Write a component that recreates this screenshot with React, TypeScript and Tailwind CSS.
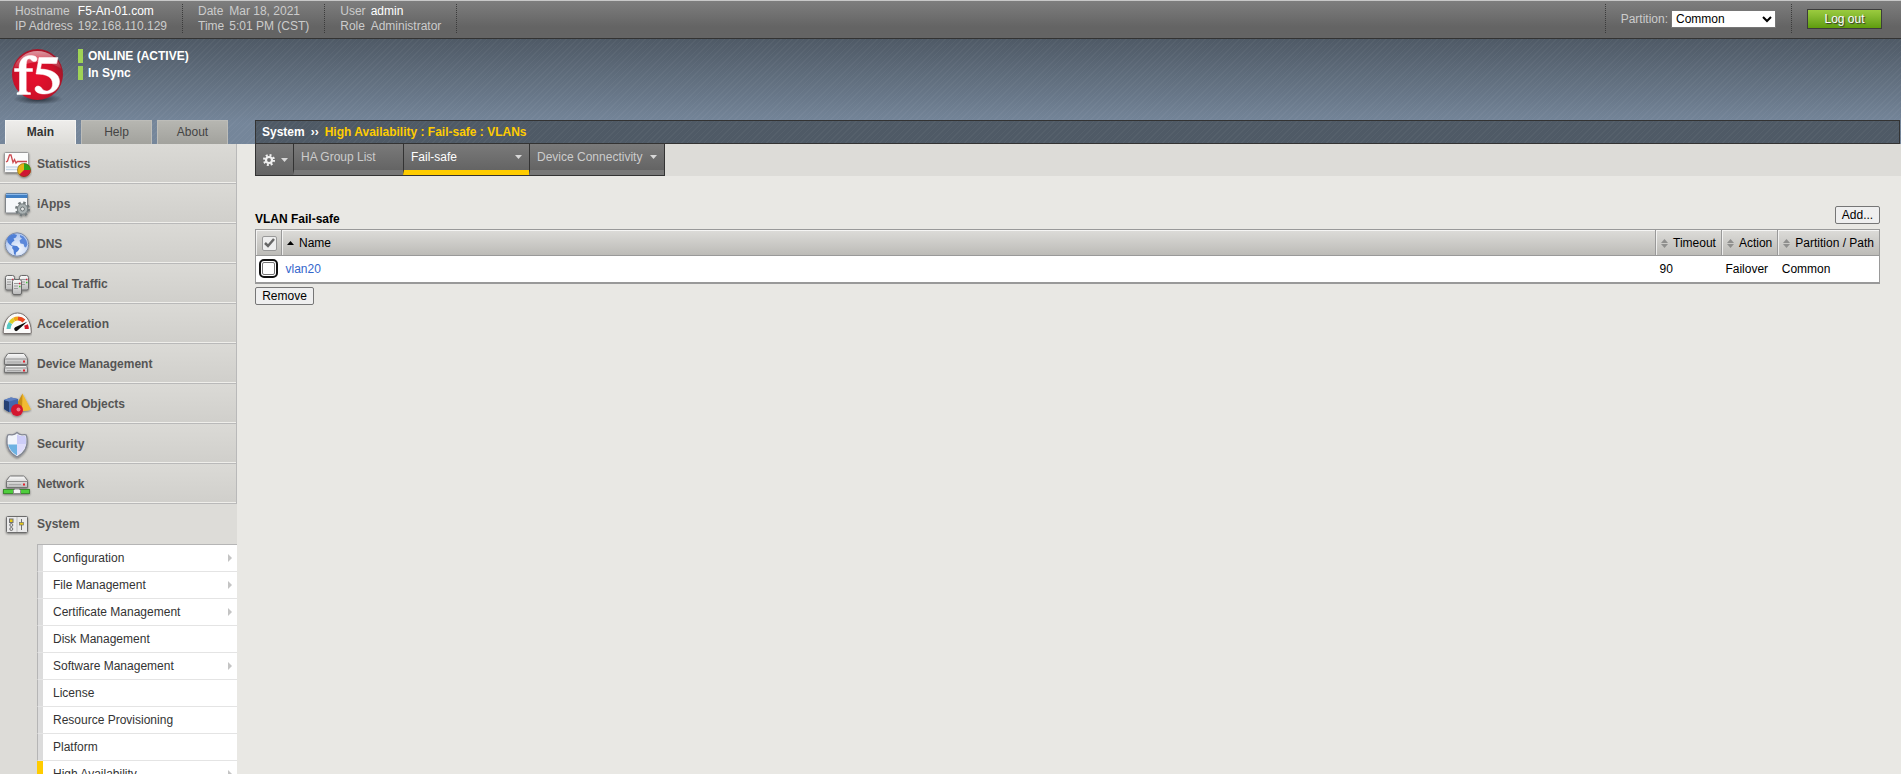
import React from "react";

const EMBOSS = "bg-linear-to-b from-[#dbdad6] to-[#d0cfcb]";

function IconShadow({ id }: { id: string }) {
  return (
    <filter id={id} x="-20%" y="-20%" width="150%" height="150%">
      <feDropShadow dx="0" dy="1" stdDeviation="1" floodOpacity="0.45" />
    </filter>
  );
}

function Frame({ name, children }: { name: string; children: React.ReactNode }) {
  return (
    <svg viewBox="0 0 32 32" width="32" height="32" className="shrink-0" aria-hidden="true">
      <defs>
        <IconShadow id={`sh-${name}`} />
        <linearGradient id={`metal-${name}`} x1="0" y1="0" x2="0" y2="1">
          <stop offset="0" stopColor="#fbfbfb" />
          <stop offset="1" stopColor="#b9b9b9" />
        </linearGradient>
      </defs>
      <g filter={`url(#sh-${name})`}>{children}</g>
    </svg>
  );
}

function StatisticsIcon() {
  return (
    <Frame name="stat">
      <rect x="4.5" y="4.5" width="24" height="20" rx="1" fill="#fcfcfc" stroke="#9a9a9a" />
      <path d="M6 19h21M6 21.500h21" stroke="#c6d8e8" strokeWidth="1.500" />
      <path d="M6 14l1.500-1 2-6 1.500 0 2 7.500 1.500-3 1.500 3.500 1.500-1.500H27" fill="none" stroke="#cc4a50" strokeWidth="1.300" />
      <circle cx="24" cy="22" r="6.800" fill="#e7b416" />
      <path d="M24 22V15.200A6.800 6.800 0 0 1 30.800 22Z" fill="#2ea31f" />
      <path d="M24 22H30.800A6.800 6.800 0 0 1 19.200 26.800Z" fill="#d01832" />
      <circle cx="24" cy="22" r="6.500" fill="none" stroke="#5c4a20" strokeOpacity="0.600" strokeWidth="0.800" />
    </Frame>
  );
}

function AppsIcon() {
  return (
    <Frame name="apps">
      <rect x="5.500" y="5.500" width="22" height="19.500" rx="1" fill="#f6f8fa" stroke="#808488" />
      <rect x="6" y="5.500" width="21.500" height="4.500" fill="#3f7fc4" />
      <path d="M6 6.500h21" stroke="#8ab8ea" />
      <circle cx="22.500" cy="21" r="6.200" fill="none" stroke="#727a7c" strokeWidth="2.600" strokeDasharray="2.430 2.430" />
      <circle cx="22.500" cy="21" r="5.200" fill="#aab2b3" stroke="#767e80" />
      <circle cx="22.500" cy="21" r="2" fill="#e4e6e6" stroke="#6d7577" />
    </Frame>
  );
}

function DnsIcon() {
  return (
    <Frame name="dns">
      <defs>
        <radialGradient id="globe" cx="0.550" cy="0.700" r="0.700">
          <stop offset="0" stopColor="#f7faff" />
          <stop offset="1" stopColor="#a9c2ee" />
        </radialGradient>
      </defs>
      <circle cx="17" cy="16.500" r="11.700" fill="url(#globe)" stroke="#7d8ba6" />
      <path d="M7 11c1.500-3 4-4.500 7-5l3 1-1 2.500-2.500 1 1 2-2.500 2-1 2 2.500 1.500-1 .5-3-2L7.500 14z" fill="#4f7fd6" />
      <path d="M13 17.500l4 .5 2.500 2.500-1.500 2.500-2 1.500-.5 3-1.500-1.500-.5-4-1.500-2z" fill="#4f7fd6" />
      <path d="M20 7l3.500 1.500 3 4 1 4-1.500 3-1.500-.5-1-3-3-.5-1-3 2.500-2-2-1.500z" fill="#5b88da" />
    </Frame>
  );
}

function Tower({ x, y, h }: { x: number; y: number; h: number }) {
  return (
    <g>
      <path d={`M${x} ${y + 2}q0-2 2-2h5q2 0 2 2v${h}q0 1.500-1.500 1.500h-6q-1.500 0-1.500-1.500z`} fill="url(#metal-ltm)" stroke="#6a6a6a" />
      <path d={`M${x + 1.500} ${y + 4}h6M${x + 1.500} ${y + 6.500}h4M${x + 1.500} ${y + 9}h4`} stroke="#9b9b9b" />
      <path d={`M${x + 6.500} ${y + 4}h1.500`} stroke="#d3203a" strokeWidth="1.500" />
      <path d={`M${x + 6.500} ${y + 7}h1.500`} stroke="#3fbf35" strokeWidth="1.500" />
    </g>
  );
}

function LocalTrafficIcon() {
  return (
    <Frame name="ltm">
      <Tower x={5.500} y={7.500} h={11} />
      <Tower x={19.500} y={7.500} h={11} />
      <Tower x={12.500} y={11.500} h={11.500} />
    </Frame>
  );
}

function AccelerationIcon() {
  return (
    <Frame name="acc">
      <path d="M4 25.500q-1 0-.8-1.500C3.500 12 10 5 17.500 5S31 12 31.300 24q0 1.500-1 1.500z" fill="#fbfbfa" stroke="#77706e" />
      <g fill="none" strokeWidth="4">
        <path d="M8.500 21a9.500 9.500 0 0 1 2-6" stroke="#58c7c4" />
        <path d="M10.500 15a9.500 9.500 0 0 1 3.500-3.500" stroke="#d9cf2c" />
        <path d="M14 11.500a9.500 9.500 0 0 1 4-1" stroke="#f2a516" />
        <path d="M18 10.500a9.500 9.500 0 0 1 6 2.500" stroke="#e8441c" />
        <path d="M26 17a10 10 0 0 1 .8 4" stroke="#cf1226" />
      </g>
      <path d="M27.500 13.500l-12.300 5.800a2 2 0 1 0 2 3.500z" fill="#101010" />
    </Frame>
  );
}

function DeviceIcon() {
  return (
    <Frame name="dev">
      <path d="M4.500 10.500l3-4.500q.3-.5 1-.5h15q.7 0 1 .5l3 4.500v6h-23z" fill="url(#metal-dev)" stroke="#737373" />
      <path d="M4.500 11h23" stroke="#8f8f8f" />
      <path d="M5.500 17.500h21l1 2.500v4.500h-23V20z" fill="url(#metal-dev)" stroke="#737373" />
      <path d="M4.500 20h23" stroke="#8f8f8f" />
      <path d="M7 14h14M7 22.500h14" stroke="#a8a8a8" />
      <path d="M23 13.500h2M23 22.500h2" stroke="#e2202e" strokeWidth="2" />
    </Frame>
  );
}

function ObjectsIcon() {
  return (
    <Frame name="obj">
      <path d="M22.500 5.500L31 21.500q-5 2.500-13 .5z" fill="#f2bb30" />
      <path d="M22.500 5.500L18 14v8l4 1z" fill="#c98f14" />
      <path d="M4 12l7-2.500 7 1.500v11.500l-9 1.500-5-3z" fill="#4567ad" />
      <path d="M4 12l5 1.500V24l-5-3z" fill="#263f73" />
      <path d="M4 12l7-2.500 7 1.500-9 2.500z" fill="#5f80c0" />
      <circle cx="17" cy="22" r="6" fill="#d4142f" />
      <circle cx="18.500" cy="21.500" r="2" fill="#f07b8b" />
    </Frame>
  );
}

function SecurityIcon() {
  return (
    <Frame name="sec">
      <path d="M17 4.500q2 2 5 2.300 3-.3 4 0 .8 1 1 3.700Q28.500 23 17 29 5.500 23 7 10.500q.2-2.700 1-3.700 1-.3 4 0 3-.3 5-2.300z" fill="#f2f5fb" stroke="#838793" strokeWidth="1.300" />
      <path d="M17 6.500q3 2 8.500 1.500 1 4 .5 8.500h-9z" fill="#cdcdf8" />
      <path d="M8.100 16.500H17V27.500q-7-4-8.900-11z" fill="#6db2e2" />
      <path d="M17 16.500h8.900Q24 23.500 17 27.500z" fill="#dedcfb" />
    </Frame>
  );
}

function NetworkIcon() {
  return (
    <Frame name="net">
      <path d="M6.500 12.500l3-4q.3-.5 1-.5h13q.7 0 1 .5l3 4v7h-21z" fill="url(#metal-net)" stroke="#737373" />
      <path d="M6.500 13.500h21" stroke="#8f8f8f" />
      <path d="M9 16.500h12" stroke="#a8a8a8" />
      <path d="M23 16.500h2" stroke="#e2202e" strokeWidth="2" />
      <rect x="3.500" y="21.500" width="26" height="4" fill="#4fce3c" stroke="#3a8a2e" />
      <path d="M13.500 25.500v-3l1.500-1.500h4l1.500 1.500v3z" fill="#f5f5f5" stroke="#8a8a8a" />
    </Frame>
  );
}

function SystemIcon() {
  return (
    <Frame name="sys">
      <rect x="6.500" y="8.500" width="21" height="16" rx="1" fill="#e9e9e9" stroke="#6c6c6c" />
      <path d="M17 9v15" stroke="#bdbdbd" />
      <rect x="9.500" y="11" width="3.500" height="3.500" fill="#e6c914" stroke="#707070" />
      <circle cx="11.300" cy="17" r="1.500" fill="#ddd" stroke="#707070" />
      <circle cx="11.300" cy="21" r="1.500" fill="#ddd" stroke="#707070" />
      <path d="M21.500 11v11" stroke="#707070" />
      <rect x="19.500" y="14.500" width="4" height="2.500" fill="#e6c914" stroke="#707070" strokeWidth="0.700" />
    </Frame>
  );
}

const modules = [
  { label: "Statistics", Icon: StatisticsIcon },
  { label: "iApps", Icon: AppsIcon },
  { label: "DNS", Icon: DnsIcon },
  { label: "Local Traffic", Icon: LocalTrafficIcon },
  { label: "Acceleration", Icon: AccelerationIcon },
  { label: "Device Management", Icon: DeviceIcon },
  { label: "Shared Objects", Icon: ObjectsIcon },
  { label: "Security", Icon: SecurityIcon },
  { label: "Network", Icon: NetworkIcon },
];

const systemMenu = [
  { label: "Configuration", more: true },
  { label: "File Management", more: true },
  { label: "Certificate Management", more: true },
  { label: "Disk Management", more: false },
  { label: "Software Management", more: true },
  { label: "License", more: false },
  { label: "Resource Provisioning", more: false },
  { label: "Platform", more: false },
  { label: "High Availability", more: true, active: true },
];

function Logo() {
  return (
    <svg viewBox="0 1 56 56" width="56" height="56" aria-label="f5" role="img">
      <defs>
        <radialGradient id="ball" cx="0.450" cy="0.550" r="0.600">
          <stop offset="0" stopColor="#e8102e" />
          <stop offset="0.650" stopColor="#cf1029" />
          <stop offset="1" stopColor="#96192a" />
        </radialGradient>
        <linearGradient id="gloss" x1="0" y1="0" x2="0" y2="1">
          <stop offset="0" stopColor="#fff" stopOpacity="0.550" />
          <stop offset="1" stopColor="#fff" stopOpacity="0.050" />
        </linearGradient>
        <radialGradient id="ground">
          <stop offset="0" stopColor="#1c232c" stopOpacity="0.900" />
          <stop offset="1" stopColor="#1c232c" stopOpacity="0" />
        </radialGradient>
      </defs>
      <ellipse cx="28" cy="51" rx="25" ry="5.500" fill="url(#ground)" />
      <circle cx="27.500" cy="26.500" r="25.500" fill="url(#ball)" />
      <path d="M3.500 21A25 25 0 0 1 51.500 21Q40 13 27.500 14T3.500 21z" fill="url(#gloss)" />
      <g fill="#fff" stroke="#fff" strokeWidth="0.500">
        <path d="M4.500 20.500H9c0-8 4.500-13 11.500-13 3.500 0 6.500 1 6.500 3.500 0 1.600-1.200 2.600-2.800 2.600-2.600 0-2.800-2.800-5-2.800-2.500 0-3 3-3 9.700h6.300v3h-6.300v18c0 2.300 1 2.900 4.300 3.200v1.800H7v-1.800c2-.3 2.500-1 2.500-3.200v-18h-5z" />
        <path d="M29 9.500h19l-1.500 6H31.500l-1 5.500c11 .5 19 4.500 19 12.500 0 7.500-7 12.500-15 12.500-5.500 0-9.500-2-9.500-5 0-1.700 1.300-3 3.200-3 3.600 0 3.800 5 8 5 4 0 6.300-3 6.300-7.300 0-7-6.500-9.700-16.500-9.700z" />
      </g>
    </svg>
  );
}

function Info({ rows }: { rows: { term: string; value: string; strong?: boolean }[] }) {
  return (
    <dl className="grid grid-cols-[auto_auto] gap-x-[5px] border-r border-dotted border-[#3b3b3b] px-[15px] leading-[14px]">
      {rows.map((r) => (
        <React.Fragment key={r.term}>
          <dt>{r.term}</dt>
          <dd className={r.strong ? "text-white" : ""}>{r.value}</dd>
        </React.Fragment>
      ))}
    </dl>
  );
}

function Caret() {
  return (
    <svg width="7" height="4" viewBox="0 0 7 4" aria-hidden="true" className="shrink-0">
      <path d="M0 0h7L3.500 4z" fill="#d8d8d8" />
    </svg>
  );
}

function SortIcon() {
  return (
    <svg width="7" height="9" viewBox="0 0 7 9" aria-hidden="true" className="shrink-0">
      <path d="M0 4L3.500 0 7 4zM0 5h7L3.500 9z" fill="#8f8f8d" />
    </svg>
  );
}

function SortHead({ label }: { label: string }) {
  return (
    <th className="border-l border-[#999] p-0 font-normal">
      <button className="flex h-[25px] w-full items-center gap-[5px] border-t border-l border-white/70 pr-[5px] pl-1 whitespace-nowrap">
        <SortIcon />
        {label}
      </button>
    </th>
  );
}

const STRIPES =
  "bg-[repeating-linear-gradient(135deg,rgba(255,255,255,0.035)_0px,rgba(255,255,255,0.035)_1px,transparent_1px,transparent_4px)]";

export default function App() {
  return (
    <div className="flex h-screen flex-col overflow-hidden bg-[#e9e8e4] font-['Liberation_Sans',Arial,sans-serif] text-[12px] leading-[14px] text-black">
      <div className="flex h-[39px] shrink-0 justify-between border-t border-b border-t-[#c8c8c8] border-b-[#333] bg-linear-to-b from-[#7e7e7e] to-[#646464] to-70% pt-[3px] pb-[5px] text-[#ccc]">
        <div className="flex">
          <Info rows={[{ term: "Hostname", value: "F5-An-01.com", strong: true }, { term: "IP Address", value: "192.168.110.129" }]} />
          <Info rows={[{ term: "Date", value: "Mar 18, 2021" }, { term: "Time", value: "5:01 PM (CST)" }]} />
          <Info rows={[{ term: "User", value: "admin", strong: true }, { term: "Role", value: "Administrator" }]} />
        </div>
        <div className="flex">
          <div className="flex items-center gap-[3px] border-r border-l border-dotted border-[#3b3b3b] px-[15px]">
            <label htmlFor="partition">Partition:</label>
            <select id="partition" className="h-[18px] w-[105px] border border-[#767676] bg-white text-black">
              <option>Common</option>
            </select>
          </div>
          <div className="flex items-center pr-[19px] pl-[15px]">
            <button className="h-5 w-[75px] border border-[#3c3c3c] bg-linear-to-b from-[#9bcb3f] to-[#5f9d0c] text-white [text-shadow:1px_1px_1px_#333]">
              Log out
            </button>
          </div>
        </div>
      </div>

      <header className="shrink-0 bg-linear-to-b from-[#4f5a66] to-[#75869a] to-80%">
        <div className={`flex h-[105px] flex-col justify-between ${STRIPES}`}>
          <div className="flex gap-3 pt-[10px] pl-[10px]">
            <Logo />
            <div className="flex flex-col gap-[3px] font-bold text-white">
              <p className="border-l-5 border-[#9fd356] pl-[5px]">ONLINE (ACTIVE)</p>
              <p className="border-l-5 border-[#9fd356] pl-[5px]">In Sync</p>
            </div>
          </div>
          <div className="flex h-6">
            <nav className="flex w-[255px] shrink-0 gap-[5px] pl-[5px] text-center">
              <a href="#main" className="w-[71px] border border-b-0 border-[#f4f4f2] bg-linear-to-b from-[#eeedeb] to-[#dddcd8] pt-1 font-bold text-[#333]">Main</a>
              <a href="#help" className="w-[71px] border border-b-0 border-[#bdbdb9] bg-linear-to-b from-[#b6b6b1] to-[#a2a29d] pt-1 text-[#444]">Help</a>
              <a href="#about" className="w-[71px] border border-b-0 border-[#bdbdb9] bg-linear-to-b from-[#b6b6b1] to-[#a2a29d] pt-1 text-[#444]">About</a>
            </nav>
            <div className="mr-px flex grow items-center border border-[#333] bg-[#4f5a66] font-bold">
              <div className={`flex h-full grow items-center gap-[6px] pl-[6px] ${STRIPES}`}>
                <span className="text-white">System</span>
                <span className="text-white">››</span>
                <h1 className="text-[#fc0]">High Availability : Fail-safe : VLANs</h1>
              </div>
            </div>
          </div>
        </div>
      </header>

      <div className="flex min-h-0 grow">
        <aside className="w-[237px] shrink-0 overflow-hidden bg-[#dddcd8]">
          <nav>
            {modules.map(({ label, Icon }) => (
              <a key={label} href="#module" className={`flex h-10 items-center gap-[5px] border-r border-b border-[#b9b9b9] font-bold text-[#555] shadow-[inset_0_-1px_0_#efeeea] ${EMBOSS}`}>
                <Icon />
                {label}
              </a>
            ))}
            <a href="#system" className="flex h-10 items-center gap-[5px] font-bold text-[#555]">
              <SystemIcon />
              System
            </a>
            <ul className="ml-[37px] border-t border-[#b5b5b5] text-[#333]">
              {systemMenu.map((m) => (
                <li key={m.label}>
                  <a
                    href="#item"
                    className={`flex h-[27px] items-center justify-between border-b border-b-[#e4e4e4] bg-white pr-[5px] ${
                      m.active ? "border-l-6 border-l-[#fc0] pl-[10px]" : "border-l border-l-[#b5b5b5]"
                    }`}
                  >
                    <span className={m.active ? "" : "flex h-full items-center border-l-5 border-[#dcdcdc] pl-[10px]"}>{m.label}</span>
                    {m.more && (
                      <svg width="4" height="8" viewBox="0 0 4 8" aria-hidden="true">
                        <path d="M0 0l4 4-4 4z" fill="#c4c4c4" />
                      </svg>
                    )}
                  </a>
                </li>
              ))}
            </ul>
          </nav>
        </aside>

        <main className="grow pl-[18px]">
          <div className="bg-[#dddcd8]">
            <nav className="flex h-8 w-fit border border-t-0 border-[#333] text-[#ccc]">
              <button aria-label="Options" className="flex w-[37px] items-center gap-[6px] bg-linear-to-b from-[#7a7a7a] to-[#646464] pl-[7px]">
                <svg width="12" height="12" viewBox="0 0 12 12" aria-hidden="true">
                  <circle cx="6" cy="6" r="4.800" fill="none" stroke="#f0f0f0" strokeWidth="2.400" strokeDasharray="1.885 1.885" />
                  <circle cx="6" cy="6" r="3" fill="none" stroke="#f0f0f0" strokeWidth="2.200" />
                </svg>
                <Caret />
              </button>
              <a href="#ha" className="w-[110px] border-b-5 border-l border-b-[#787878] border-l-[#333] bg-linear-to-b from-[#7a7a7a] to-[#646464] pt-[6px] pl-[7px]">HA Group List</a>
              <a href="#fs" className="flex w-[126px] items-start justify-between border-b-5 border-l border-b-[#fc0] border-l-[#333] bg-linear-to-b from-[#7a7a7a] to-[#646464] pt-[6px] pr-[7px] pl-[7px] text-white">
                Fail-safe
                <span className="pt-[5px]"><Caret /></span>
              </a>
              <a href="#dc" className="flex w-[135px] items-start justify-between border-b-5 border-l border-b-[#787878] border-l-[#333] bg-linear-to-b from-[#7a7a7a] to-[#646464] pt-[6px] pr-[7px] pl-[7px]">
                Device Connectivity
                <span className="pt-[5px]"><Caret /></span>
              </a>
            </nav>
          </div>

          <section className="pt-[30px] pr-[21px]">
            <div className="flex items-end justify-between pb-[5px]">
              <h2 className="font-bold leading-[10px]">VLAN Fail-safe</h2>
              <button className="h-[18px] w-[45px] rounded-[2px] border border-[#767676] bg-[#efefef] leading-[14px]">Add...</button>
            </div>
            <table className="w-full border-collapse border border-[#999] bg-white text-left">
              <thead>
                <tr className="border-b border-[#999] bg-linear-to-b from-[#dddcd9] to-[#bcbbb7]">
                  <th className="p-0">
                    <span className="flex h-[25px] w-[25px] items-center justify-center border-t border-l border-white/70">
                      <label className="relative flex size-[15px] items-center justify-center rounded-[2px] border border-[#999] bg-[#eee]">
                        <input type="checkbox" defaultChecked aria-label="Select all" className="absolute inset-0 appearance-none" />
                        <svg width="11" height="10" viewBox="0 0 11 10" aria-hidden="true">
                          <path d="M1 5l3 3 6-7" fill="none" stroke="#666" strokeWidth="2.500" />
                        </svg>
                      </label>
                    </span>
                  </th>
                  <th className="w-full border-l border-[#999] p-0 font-normal">
                    <button className="flex h-[25px] w-full items-center gap-[5px] border-t border-l border-white/70 pl-1">
                      <svg width="7" height="4" viewBox="0 0 7 4" aria-hidden="true">
                        <path d="M0 4h7L3.500 0z" fill="#000" />
                      </svg>
                      Name
                    </button>
                  </th>
                  <SortHead label="Timeout" />
                  <SortHead label="Action" />
                  <SortHead label="Partition / Path" />
                </tr>
              </thead>
              <tbody>
                <tr className="h-[27px] border-b-2 border-[#999]">
                  <td className="p-0">
                    <input type="checkbox" aria-label="Select vlan20" className="mx-auto block size-[13px] appearance-none rounded-[2px] border border-[#767676] bg-white outline-2 outline-offset-1 outline-[#101010]" />
                  </td>
                  <td className="py-0 pr-0 pl-1"><a href="#vlan20" className="text-[#36c]">vlan20</a></td>
                  <td className="py-0 pr-0 pl-1">90</td>
                  <td className="py-0 pr-0 pl-1">Failover</td>
                  <td className="py-0 pr-0 pl-1">Common</td>
                </tr>
              </tbody>
            </table>
            <button className="mt-[3px] h-[18px] w-[59px] rounded-[2px] border border-[#767676] bg-[#efefef] leading-[14px]">Remove</button>
          </section>
        </main>
      </div>
    </div>
  );
}
